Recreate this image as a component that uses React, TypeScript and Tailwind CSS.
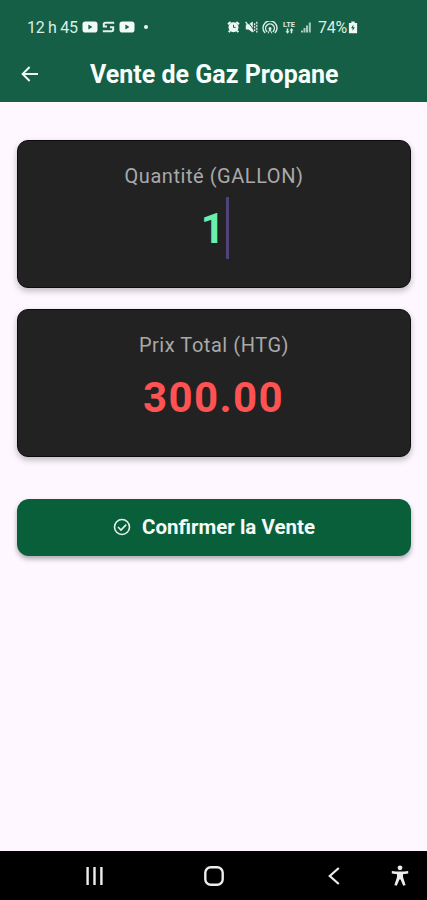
import type { ReactNode } from 'react'

function YoutubeIcon({ className }: { className?: string }) {
  return (
    <svg className={className} width="16" height="12" viewBox="0 0 16 12">
      <rect x="0.5" y="0.5" width="15" height="11" rx="2.8" fill="#f1faf5" />
      <path d="M6.4 3.6L10.4 6L6.4 8.4Z" fill="#155f47" />
    </svg>
  )
}

function SyncIcon() {
  return (
    <svg className="ml-1" width="13" height="12" viewBox="0 0 13 12" fill="none" stroke="#e3f1ea" strokeWidth="2">
      <path d="M12.2 1.8H3.4Q1.8 1.8 1.8 3.4V5.4H5" />
      <path d="M0.8 10.2H9.6Q11.2 10.2 11.2 8.6V6.2H8" />
    </svg>
  )
}

function AlarmIcon() {
  return (
    <svg width="13" height="12" viewBox="0 0 13 12">
      <circle cx="6.5" cy="6.2" r="5" fill="#eef8f3" />
      <path d="M1 3.2L3.6 1M12 3.2L9.4 1M3 9.6L1.8 11.2M10 9.6L11.2 11.2" stroke="#eef8f3" strokeWidth="2" />
      <path d="M6.5 3.8V6.4H8.6" stroke="#155f47" strokeWidth="1" fill="none" />
    </svg>
  )
}

function MuteIcon() {
  return (
    <svg className="ml-[5px]" width="13" height="12" viewBox="0 0 13 12">
      <path d="M0.8 3.6H3.4L7.8 0.6V11.4L3.4 8.4H0.8Z" fill="#e8f5ee" />
      <path d="M2.6 0.6L9 9" stroke="#155f47" strokeWidth="1" />
      <path d="M0.6 0.8L8.4 10.8" stroke="#e8f5ee" strokeWidth="1.3" />
      <path d="M9.6 2.2V10M11.8 0.8V11.4" stroke="#e8f5ee" strokeWidth="1.3" strokeDasharray="2 1" />
    </svg>
  )
}

function HotspotIcon() {
  return (
    <svg className="ml-1" width="16" height="13" viewBox="0 0 16 13" fill="none" stroke="#dceee5" strokeWidth="1.4" strokeLinecap="round">
      <path d="M2.8 11.6A7 7 0 1 1 13.2 11.6" />
      <path d="M4.8 10.4A4.4 4.4 0 1 1 11.2 10.4" />
      <circle cx="8" cy="7.4" r="1.5" fill="#dceee5" stroke="none" />
      <path d="M8 8L6.4 12M8 8L9.6 12" strokeWidth="1" />
    </svg>
  )
}

function LteIcon() {
  return (
    <div className="ml-[5px] flex w-3 flex-col items-center">
      <span className="text-[7.5px] font-bold leading-[7px] text-[#d8ebe2]">LTE</span>
      <svg width="9" height="6" viewBox="0 0 8 6" fill="#d8ebe2">
        <path d="M2 5.8L0 3.2H1.2V0.6H2.8V3.2H4Z" />
        <path d="M6 0L8 2.6H6.8V5.2H5.2V2.6H4Z" />
      </svg>
    </div>
  )
}

function SignalIcon() {
  return (
    <svg className="ml-[5px]" width="12" height="12" viewBox="0 0 12 12">
      <path d="M2 11.4V9.4M4.5 11.4V7M7 11.4V4.6M9.8 11.4V1.4" stroke="#a9cbbc" strokeWidth="2" />
    </svg>
  )
}

function BatteryIcon() {
  return (
    <svg className="ml-0.5" width="10" height="13" viewBox="0 0 9 13">
      <path d="M2.8 0.6H6.2V1.9H8.6V12.2H0.4V1.9H2.8Z" fill="#f1faf5" />
      <path d="M4.9 3.4L2.6 7.2H4.2L3.8 10L6.4 6.2H4.7Z" fill="#155f47" />
    </svg>
  )
}

function StatusBar() {
  return (
    <div className="flex h-[54px] items-center pl-[27px] text-[#dceee5]">
      <span className="w-[55px] whitespace-nowrap pt-0.5 text-[16px] tracking-[-0.3px]">12 h 45</span>
      <YoutubeIcon />
      <SyncIcon />
      <YoutubeIcon className="ml-1" />
      <span className="ml-[9px] size-1 rounded-full bg-[#eef8f3]" />
      <div className="ml-[79px] flex items-center">
        <AlarmIcon />
        <MuteIcon />
        <HotspotIcon />
        <LteIcon />
        <SignalIcon />
        <span className="ml-[6px] w-[28px] whitespace-nowrap pt-0.5 text-[16px] tracking-[-0.3px]">74%</span>
        <BatteryIcon />
      </div>
    </div>
  )
}

function AppBar() {
  return (
    <div className="flex h-[48px] items-start pl-[21px]">
      <svg className="mt-3" width="18" height="16" viewBox="0 0 18 16" fill="none" stroke="#f4fbf7" strokeWidth="1.9">
        <path d="M17 8H2" />
        <path d="M8.6 1L1.6 8L8.6 15" />
      </svg>
      <h1 className="ml-[51px] mt-[5px] whitespace-nowrap text-[25px] font-bold leading-8 text-[#f7fdfa]">Vente de Gaz Propane</h1>
    </div>
  )
}

function ValueCard({ label, children }: { label: string; children: ReactNode }) {
  return (
    <section className="flex h-[148px] flex-col items-center rounded-[11px] border border-[#0c0c0c] bg-[#222222] pt-[21px] shadow-[0_3px_6px_rgba(0,0,0,0.25)]">
      <h2 className="text-[20px] leading-7 tracking-[0.55px] text-[#a9a9a9]">{label}</h2>
      {children}
    </section>
  )
}

function NavBar() {
  return (
    <nav className="flex h-[49px] items-center bg-black pl-[86px] text-[#ededed]">
      <svg width="17" height="18" viewBox="0 0 17 18" stroke="currentColor" strokeWidth="2.4">
        <path d="M1.6 0V18M8.5 0V18M15.4 0V18" />
      </svg>
      <svg className="ml-[101px]" width="20" height="20" viewBox="0 0 20 20" fill="none" stroke="currentColor" strokeWidth="2.4">
        <rect x="1.3" y="1.3" width="17.4" height="17.4" rx="5.5" />
      </svg>
      <svg className="ml-[104px]" width="12" height="18" viewBox="0 0 12 18" fill="none" stroke="currentColor" strokeWidth="2.2">
        <path d="M10.8 1L1.8 9L10.8 17" />
      </svg>
      <svg className="ml-[51px]" width="18" height="21" viewBox="0 0 18 21" fill="currentColor">
        <circle cx="9" cy="2.8" r="2.4" />
        <path d="M0.8 6Q9 7.2 17.2 6V8.6L12 9.3V12L14.6 20L12.2 20.8L9.6 14.4H8.4L5.8 20.8L3.4 20L6 12V9.3L0.8 8.6Z" />
      </svg>
    </nav>
  )
}

export default function App() {
  return (
    <div className="flex h-[900px] w-[427px] flex-col overflow-hidden bg-[#fef7ff] font-['Roboto',sans-serif]">
      <header className="h-[102px] shrink-0 bg-[#155f47]">
        <StatusBar />
        <AppBar />
      </header>

      <main className="flex-1 pl-[17px] pr-4 pt-[38px]">
        <ValueCard label="Quantité (GALLON)">
          <div className="mt-[7px] flex h-[62px] items-center pl-[2px]">
            <span className="pt-0.5 text-[42px] font-bold leading-none tracking-[1.5px] text-[#69f0ae]">1</span>
            <span className="h-full w-[3px] bg-[#4f4378]" />
          </div>
        </ValueCard>
        <div className="h-[21px]" />
        <ValueCard label="Prix Total (HTG)">
          <div className="mt-[7px] flex h-[62px] items-center pr-px pt-0.5 text-[42px] font-bold leading-none tracking-[1.4px] text-[#ff5252]">
            300.00
          </div>
        </ValueCard>

        <button className="mt-[42px] flex h-[57px] w-full items-center justify-center rounded-[12px] bg-[#0a5f3b] text-[20.5px] font-bold text-[#f4fbf7] shadow-[0_3px_5px_rgba(0,0,0,0.32)]">
          <svg className="-mt-0.5 mr-[11px]" width="18" height="18" viewBox="0 0 18 18" fill="none" stroke="#e4f3ea" strokeWidth="1.6">
            <circle cx="9" cy="9" r="7.5" />
            <path d="M5 9L8 12L13.2 6.6" />
          </svg>
          Confirmer la Vente
        </button>
      </main>

      <NavBar />
    </div>
  )
}
